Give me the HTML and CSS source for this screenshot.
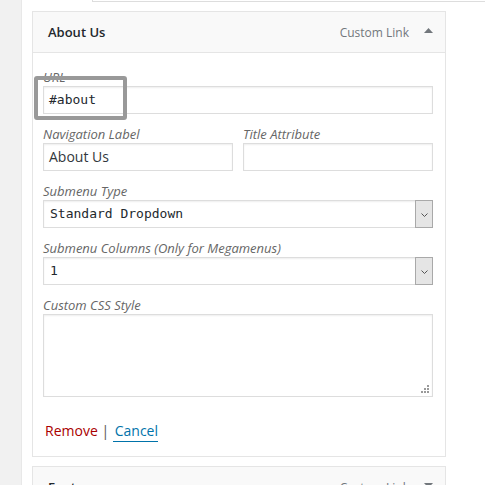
FILE: index.html
```html
<!DOCTYPE html>
<html>
<head>
<meta charset="utf-8">
<link rel="stylesheet" href="styles.css">
</head>
<body>
<div class="page">
  <div class="strip"></div>
  <div class="main">
    <div class="prev"></div>
    <div class="item">
      <div class="item-head">
        <span class="item-title">About Us</span>
        <span class="item-type">Custom Link</span>
        <svg class="caret" width="9" height="5" viewBox="0 0 9 5"><polygon points="0,5 9,5 4.5,0" fill="#72777c"/></svg>
      </div>
      <div class="item-body">
        <div class="field url-field">
          <label class="lbl">URL</label>
          <div class="input mono">#about</div>
          <div class="highlight"></div>
        </div>
        <div class="row">
          <div class="field">
            <label class="lbl">Navigation Label</label>
            <div class="input">About Us</div>
          </div>
          <div class="field">
            <label class="lbl">Title Attribute</label>
            <div class="input"></div>
          </div>
        </div>
        <div class="field">
          <label class="lbl">Submenu Type</label>
          <div class="select mono">
            <span class="value">Standard Dropdown</span>
            <span class="arrow"><svg width="7" height="4" viewBox="0 0 7 4"><polyline points="0.5,0.5 3.5,3.5 6.5,0.5" fill="none" stroke="#555" stroke-width="1"/></svg></span>
          </div>
        </div>
        <div class="field">
          <label class="lbl">Submenu Columns (Only for Megamenus)</label>
          <div class="select mono">
            <span class="value">1</span>
            <span class="arrow"><svg width="7" height="4" viewBox="0 0 7 4"><polyline points="0.5,0.5 3.5,3.5 6.5,0.5" fill="none" stroke="#555" stroke-width="1"/></svg></span>
          </div>
        </div>
        <div class="field">
          <label class="lbl">Custom CSS Style</label>
          <div class="textarea">
            <svg class="grip" width="8" height="8" viewBox="0 0 8 8" fill="#9a9a9a">
              <rect x="6" y="0" width="2" height="2"/>
              <rect x="3" y="3" width="2" height="2"/><rect x="6" y="3" width="2" height="2"/>
              <rect x="0" y="6" width="2" height="2"/><rect x="3" y="6" width="2" height="2"/><rect x="6" y="6" width="2" height="2"/>
            </svg>
          </div>
        </div>
        <div class="actions">
          <a class="remove">Remove</a><span class="sep"> | </span><a class="cancel">Cancel</a>
        </div>
      </div>
    </div>
    <div class="item closed">
      <div class="item-head">
        <span class="item-title">Footer</span>
        <span class="item-type">Custom Link</span>
        <svg class="caret" width="9" height="5" viewBox="0 0 9 5"><polygon points="0,0 9,0 4.5,5" fill="#72777c"/></svg>
      </div>
    </div>
  </div>
</div>
</body>
</html>
```
FILE: styles.css
```css
html, body {
  margin: 0;
  padding: 0;
  background: #fff;
  height: 100%;
  overflow: hidden;
}
body {
  font-family: "Open Sans", "Noto Sans", sans-serif;
  color: #32373c;
}
.page {
  display: flex;
  height: 485px;
}
.strip {
  width: 21px;
  background: #f1f1f1;
  border-right: 1px solid #e8e8e8;
  flex: none;
}
.main {
  flex: 1;
  padding-left: 10px;
}
.prev {
  height: 1px;
  margin-left: 60px;
  margin-right: 4px;
  border-left: 1px solid #dddddd;
  border-bottom: 1px solid #dddddd;
}
.item {
  width: 412px;
  margin-top: 9px;
  border: 1px solid #e5e5e5;
  background: #fff;
}
.item-head {
  display: flex;
  align-items: center;
  height: 40px;
  background: #f9f9f9;
  padding: 0 12px 0 15px;
  border-bottom: 1px solid #e5e5e5;
}
.item.closed .item-head {
  border-bottom: none;
}
.item-title {
  flex: 1;
  font-size: 13px;
  font-weight: 600;
  color: #23282d;
}
.item-type {
  font-size: 12px;
  color: #72777c;
  margin-right: 15px;
}
.caret {
  display: block;
  margin-top: -3px;
}
.item-body {
  padding: 16px 12px 15px 10px;
}
.field {
  position: relative;
  margin-top: 12px;
}
.url-field {
  margin-top: 0;
}
.lbl {
  display: block;
  font-size: 13px;
  font-style: italic;
  color: #666;
  line-height: 17px;
}
.input, .select {
  box-sizing: border-box;
  height: 28px;
  border: 1px solid #dddddd;
  box-shadow: inset 0 1px 2px rgba(0, 0, 0, 0.07);
  background: #fff;
  font-size: 14px;
  line-height: 26px;
  padding: 0 5px;
  color: #32373c;
}
.mono {
  font-family: "DejaVu Sans Mono", "Liberation Mono", monospace;
  font-size: 13px;
  color: #23282d;
}
.row {
  display: grid;
  grid-template-columns: 1fr 1fr;
  column-gap: 10px;
  margin-top: 12px;
}
.row .field {
  margin-top: 0;
}
.select {
  display: flex;
  align-items: stretch;
  padding-right: 0;
  padding-left: 6px;
}
.select .value {
  flex: 1;
}
.arrow {
  width: 16px;
  margin: -1px -1px -1px 0;
  border: 1px solid #a9a9a9;
  background: #e5e5e5;
  display: flex;
  align-items: center;
  justify-content: center;
}
.arrow svg {
  display: block;
  margin-top: 1px;
}
.textarea {
  box-sizing: border-box;
  height: 83px;
  border: 1px solid #dddddd;
  box-shadow: inset 0 1px 2px rgba(0, 0, 0, 0.07);
  display: flex;
  justify-content: flex-end;
  align-items: flex-end;
  padding: 0 3px 3px 0;
}
.grip {
  display: block;
}
.highlight {
  position: absolute;
  left: -9px;
  top: 7px;
  width: 85px;
  height: 36px;
  border: 4px solid #999999;
  border-radius: 3px;
}
.actions {
  margin-top: 24px;
  font-size: 14px;
  line-height: 20px;
  color: #555;
  padding-left: 2px;
}
.remove {
  color: #aa0000;
}
.sep {
  color: #555;
}
.cancel {
  color: #0073aa;
  border-bottom: 1px solid #0073aa;
  padding-left: 2px;
  padding-bottom: 1px;
}
```
